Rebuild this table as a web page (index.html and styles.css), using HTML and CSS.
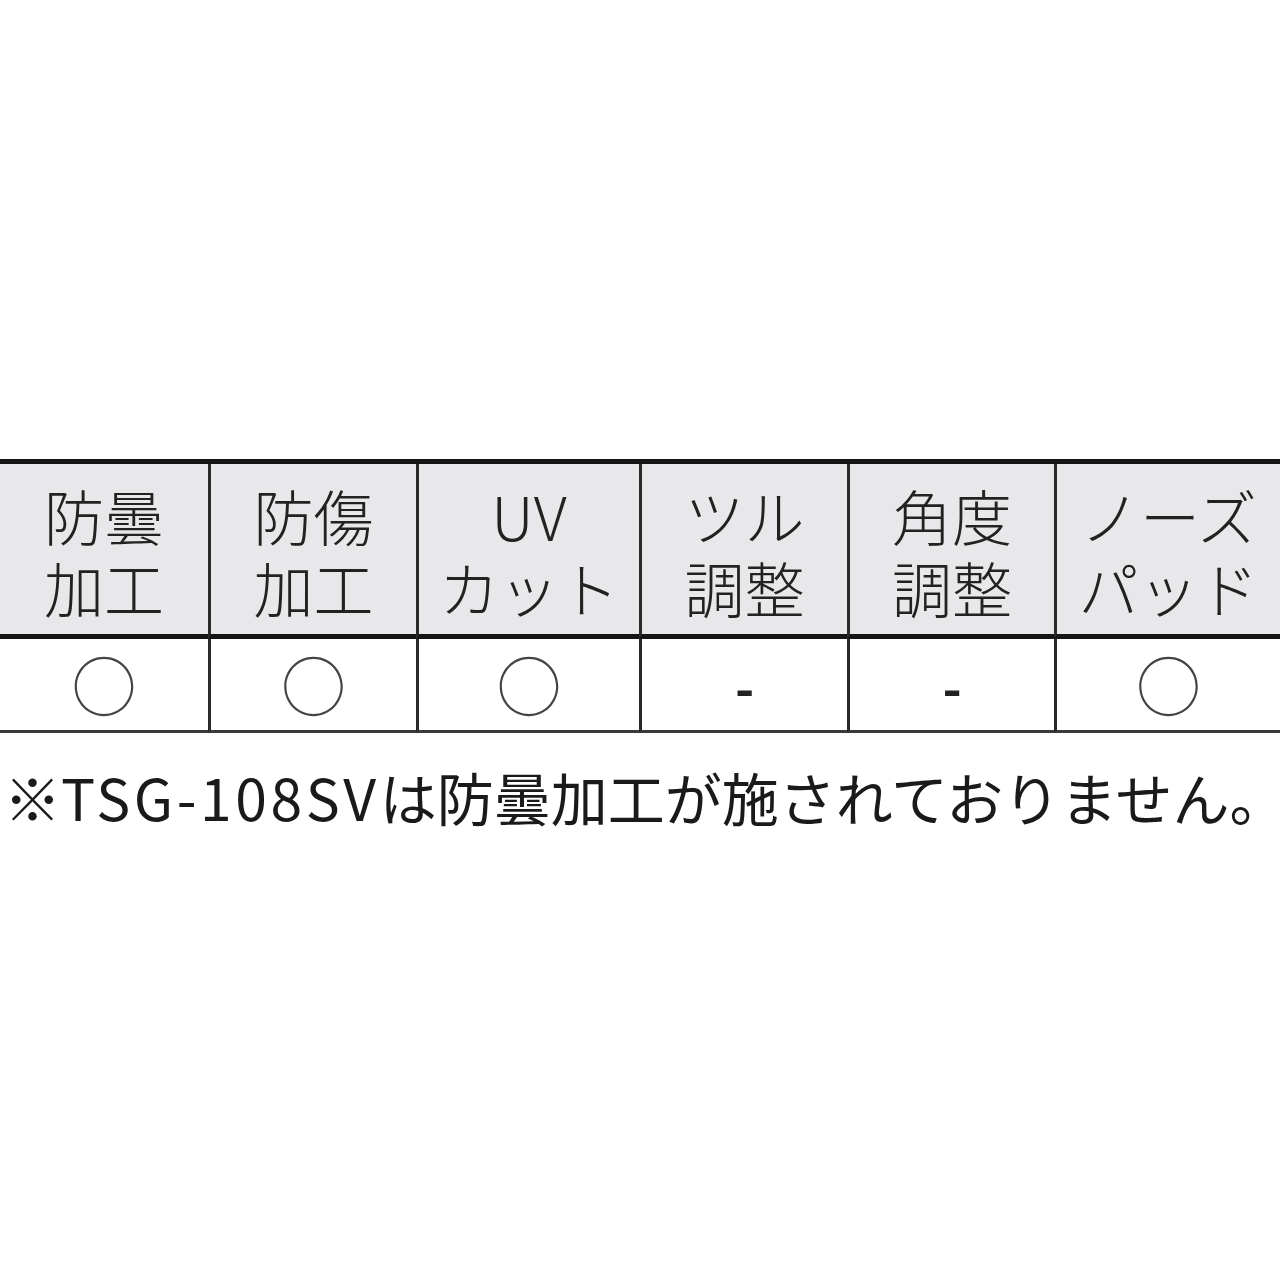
FILE: index.html
```html
<!DOCTYPE html>
<html lang="ja">
<head>
<meta charset="utf-8">
<link rel="stylesheet" href="styles.css">
</head>
<body>
<div class="page">
  <div class="spec">
    <div class="cell head">防曇<br>加工</div>
    <div class="cell head sep">防傷<br>加工</div>
    <div class="cell head sep">UV<br>カット</div>
    <div class="cell head sep">ツル<br>調整</div>
    <div class="cell head sep">角度<br>調整</div>
    <div class="cell head sep">ノーズ<br>パッド</div>
    <div class="cell val">○</div>
    <div class="cell val sep">○</div>
    <div class="cell val sep">○</div>
    <div class="cell val sep"><span class="dash">-</span></div>
    <div class="cell val sep"><span class="dash">-</span></div>
    <div class="cell val sep">○</div>
  </div>
  <p class="note">※<span class="latin">TSG-108SV</span>は防曇加工が施されておりません。</p>
</div>
</body>
</html>
```

FILE: styles.css
```css
html, body {
  margin: 0;
  padding: 0;
  background: #ffffff;
}
.page {
  width: 1280px;
  padding-top: 459px;
  font-family: "Noto Sans CJK JP", "Noto Sans", sans-serif;
  color: #222222;
}
.spec {
  display: grid;
  grid-template-columns: 208px 208px 223px 208px 207px 1fr;
  grid-template-rows: 175px 94px;
  border-top: 5px solid #151515;
}
.cell {
  display: flex;
  align-items: center;
  justify-content: center;
  text-align: center;
  box-sizing: border-box;
}
.sep {
  border-left: 3px solid #2a2a2a;
}
.head {
  background: #e8e8ea;
  border-bottom: 5px solid #151515;
  font-size: 60px;
  font-weight: 300;
  line-height: 72px;
  padding-top: 4px;
}
.val {
  border-bottom: 3px solid #3a3a3a;
  font-size: 65px;
  font-weight: 300;
  line-height: 80px;
  color: #444444;
  padding-bottom: 4px;
}
.dash {
  font-size: 52px;
  font-weight: 700;
  line-height: 80px;
  color: #222222;
  padding-top: 6px;
}
.note {
  margin: 28px 0 0 0;
  padding-left: 4px;
  font-size: 57px;
  font-weight: 400;
  line-height: 70px;
  white-space: nowrap;
  color: #1a1a1a;
}
.latin {
  letter-spacing: 3.6px;
}
```
